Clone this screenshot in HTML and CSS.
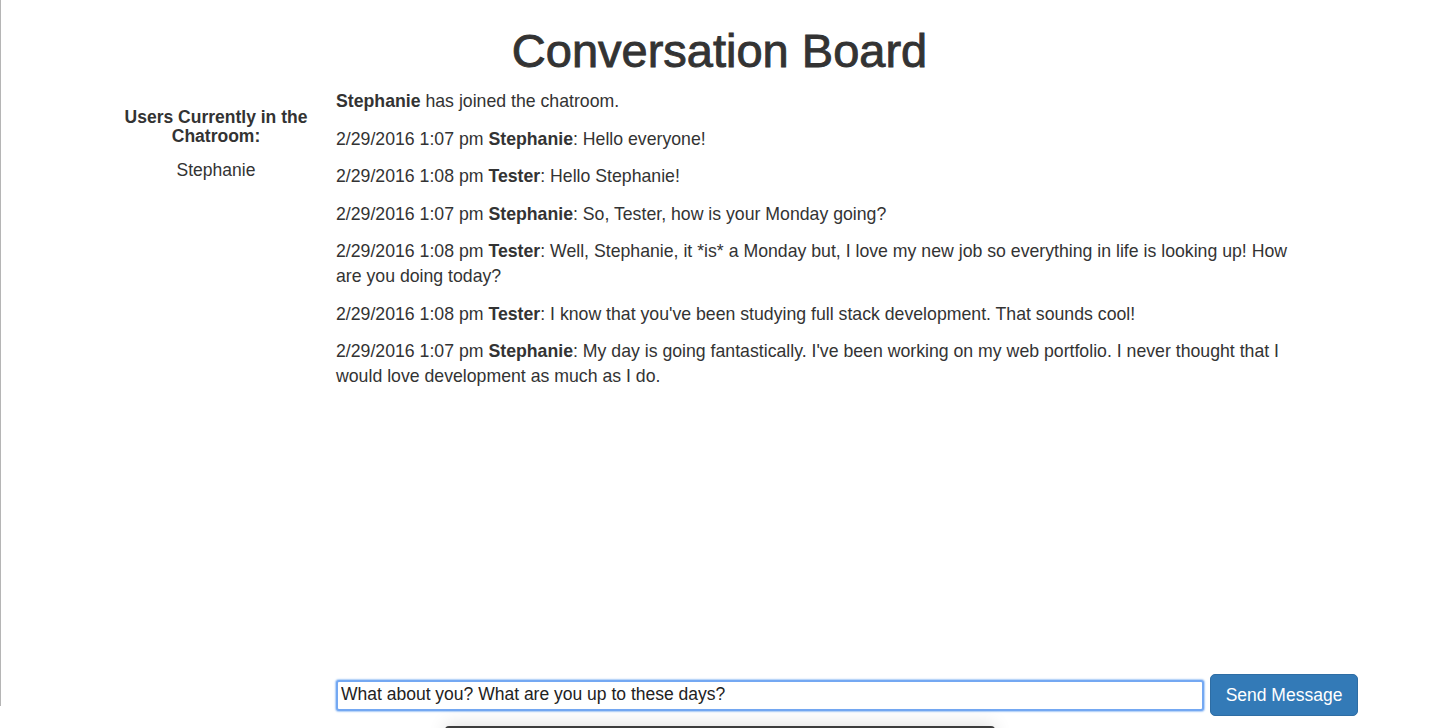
FILE: index.html
```html
<!DOCTYPE html>
<html lang="en">
<head>
<meta charset="utf-8">
<title>Conversation Board</title>
<link rel="stylesheet" href="styles.css">
</head>
<body>
<div class="page">
  <h1 class="title">Conversation Board</h1>
  <div class="board">
    <aside class="users">
      <h5 class="users-heading">Users Currently in the Chatroom:</h5>
      <p class="user">Stephanie</p>
    </aside>
    <section class="messages">
      <p class="msg"><b>Stephanie</b> has joined the chatroom.</p>
      <p class="msg">2/29/2016 1:07 pm <b>Stephanie</b>: Hello everyone!</p>
      <p class="msg">2/29/2016 1:08 pm <b>Tester</b>: Hello Stephanie!</p>
      <p class="msg">2/29/2016 1:07 pm <b>Stephanie</b>: So, Tester, how is your Monday going?</p>
      <p class="msg">2/29/2016 1:08 pm <b>Tester</b>: Well, Stephanie, it *is* a Monday but, I love my new job so everything in life is looking up! How are you doing today?</p>
      <p class="msg">2/29/2016 1:08 pm <b>Tester</b>: I know that you've been studying full stack development. That sounds cool!</p>
      <p class="msg">2/29/2016 1:07 pm <b>Stephanie</b>: My day is going fantastically. I've been working on my web portfolio. I never thought that I would love development as much as I do.</p>
    </section>
  </div>
  <form class="composer">
    <input class="composer-input" type="text" value="What about you? What are you up to these days?">
    <button class="composer-btn" type="button">Send Message</button>
  </form>
</div>
<div class="popup"></div>
</body>
</html>
```
FILE: styles.css
```css
html, body {
  margin: 0;
  padding: 0;
  height: 100%;
}
body {
  font-family: "Liberation Sans", Arial, sans-serif;
  font-size: 17.5px;
  line-height: 25px;
  color: #333;
  background: #fff;
  overflow: hidden;
}
body::before {
  content: "";
  position: fixed;
  left: 0;
  top: 0;
  width: 1px;
  height: 706px;
  background: #b5b5b5;
}
.page {
  height: 100vh;
  display: flex;
  flex-direction: column;
  box-sizing: border-box;
  padding-bottom: 12px;
}
.title {
  margin: 26px 0 13px;
  font-size: 47px;
  line-height: 50px;
  font-weight: normal;
  -webkit-text-stroke: 0.9px #333;
  text-align: center;
  color: #333;
}
.board {
  flex: 1;
  display: grid;
  grid-template-columns: 200px 971px;
  column-gap: 20px;
  padding-left: 116px;
  align-items: start;
}
.users {
  text-align: center;
}
.users-heading {
  margin: 18.5px 0 12.5px;
  font-size: 17.5px;
  line-height: 19px;
  font-weight: bold;
}
.user {
  margin: 0;
}
.messages {
  min-width: 0;
  font-size: 17.7px;
}
.msg {
  margin: 0 0 12.5px;
}
.msg b {
  font-weight: bold;
}
.composer {
  display: flex;
  align-items: center;
  gap: 6px;
  padding-left: 336px;
  margin: 0;
}
.composer-input {
  box-sizing: border-box;
  width: 868px;
  height: 31px;
  padding: 0 3px 1px;
  font-family: "Liberation Sans", Arial, sans-serif;
  font-size: 17.5px;
  color: #222;
  border: 2px solid #74a8f2;
  border-radius: 3px;
  box-shadow: 0 0 1.5px 1px #a9cbf7;
  outline: none;
  background: #fff;
}
.composer-btn {
  box-sizing: border-box;
  width: 148px;
  height: 42px;
  padding: 0;
  white-space: nowrap;
  font-family: "Liberation Sans", Arial, sans-serif;
  font-size: 17.5px;
  color: #fff;
  background: #337ab7;
  border: 1px solid #2e6da4;
  border-radius: 5px;
}
.popup {
  position: fixed;
  left: 445px;
  top: 726px;
  width: 550px;
  height: 40px;
  background: #fff;
  border-top: 2px solid #3d3d3d;
  box-shadow: 0 -2px 18px rgba(0, 0, 0, 0.12);
  border-radius: 4px 4px 0 0;
}
```
